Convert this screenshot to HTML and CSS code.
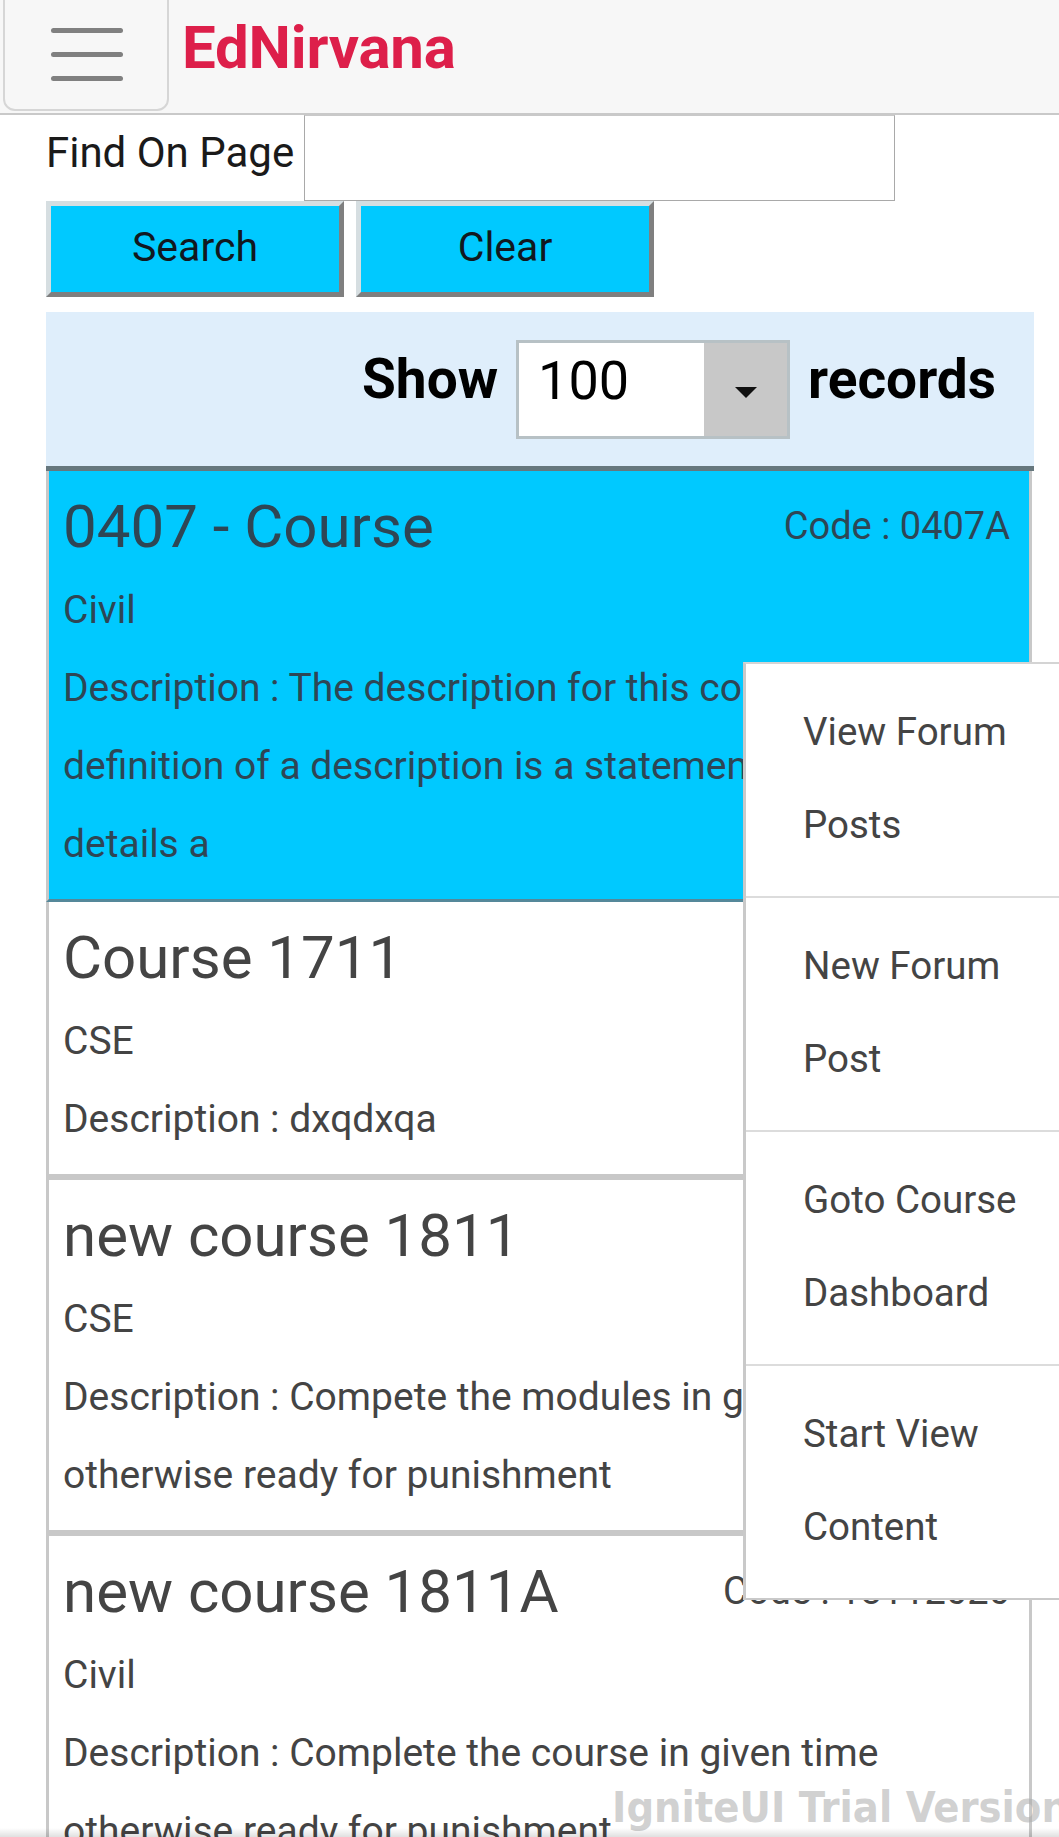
FILE: index.html
```html
<!DOCTYPE html>
<html lang="en">
<head>
<meta charset="utf-8">
<title>EdNirvana</title>
<link rel="stylesheet" href="styles.css">
</head>
<body>
<header class="header">
  <button class="burger" aria-label="Menu">
    <span class="bar"></span><span class="bar"></span><span class="bar"></span>
  </button>
  <div class="brand">EdNirvana</div>
</header>

<main class="main">
  <div class="find-row">
    <label class="find-label">Find On Page</label>
    <input class="find-input" type="text">
  </div>
  <div class="btn-row">
    <button class="btn">Search</button>
    <button class="btn">Clear</button>
  </div>

  <div class="show-bar">
    <span class="show-label">Show</span>
    <div class="select">
      <span class="select-value">100</span>
      <span class="select-arrow"><span class="tri"></span></span>
    </div>
    <span class="show-label">records</span>
  </div>

  <div class="cards">
    <div class="card card-active">
      <div class="card-head">
        <div class="card-title">0407 - Course</div>
        <div class="card-code">Code : 0407A</div>
      </div>
      <p class="card-line">Civil</p>
      <p class="card-line">Description : The description for this course. The definition of a description is a statement that gives details a</p>
    </div>
    <div class="card">
      <div class="card-head">
        <div class="card-title">Course 1711</div>
        <div class="card-code">Code : 1711</div>
      </div>
      <p class="card-line">CSE</p>
      <p class="card-line">Description : dxqdxqa</p>
    </div>
    <div class="card">
      <div class="card-head">
        <div class="card-title">new course 1811</div>
        <div class="card-code">Code : 1811</div>
      </div>
      <p class="card-line">CSE</p>
      <p class="card-line">Description : Compete the modules in given time otherwise ready for punishment</p>
    </div>
    <div class="card">
      <div class="card-head">
        <div class="card-title">new course 1811A</div>
        <div class="card-code">Code : 18112020</div>
      </div>
      <p class="card-line">Civil</p>
      <p class="card-line">Description : Complete the course in given time otherwise ready for punishment</p>
    </div>
  </div>
</main>

<div class="ctx-menu">
  <div class="ctx-item"><span class="ctx-text">View Forum Posts</span></div>
  <div class="ctx-item"><span class="ctx-text">New Forum Post</span></div>
  <div class="ctx-item"><span class="ctx-text">Goto Course Dashboard</span></div>
  <div class="ctx-item"><span class="ctx-text">Start View Content</span></div>
</div>

<div class="watermark">IgniteUI Trial Version</div>
<div class="bottom-shade"></div>
</body>
</html>
```

FILE: styles.css
```css
html, body {
  margin: 0;
  padding: 0;
  overflow: hidden;
}
body {
  position: relative;
  width: 1059px;
  height: 1837px;
  font-family: Roboto, "Liberation Sans", sans-serif;
  background: #ffffff;
  color: #444444;
}

/* Header */
.header {
  display: flex;
  align-items: flex-start;
  height: 113px;
  background: #f7f7f7;
  border-bottom: 2px solid #c9c9c9;
}
.burger {
  box-sizing: border-box;
  width: 166px;
  height: 114px;
  margin: -3px 0 0 3px;
  background: #f7f7f7;
  border: 2px solid #d6d6d6;
  border-radius: 0 0 12px 12px;
  display: flex;
  flex-direction: column;
  align-items: center;
  justify-content: center;
  gap: 19px;
  padding: 0 0 0 2px;
}
.burger .bar {
  display: block;
  width: 72px;
  height: 5px;
  border-radius: 3px;
  background: #808080;
}
.brand {
  margin: 18px 0 0 13px;
  font-size: 60px;
  line-height: 60px;
  font-weight: 700;
  color: #dd1f4a;
  letter-spacing: -0.2px;
}

/* Find row */
.main {
  padding-left: 46px;
}
.find-row {
  display: flex;
  align-items: flex-start;
}
.find-label {
  width: 258px;
  font-size: 42px;
  line-height: 75px;
  color: #1a1a1a;
}
.find-input {
  box-sizing: border-box;
  width: 591px;
  height: 86px;
  margin: 0;
  border: 1px solid #a9a9a9;
  border-top-color: #c9c9c9;
  background: #fff;
}
.btn-row {
  display: flex;
  gap: 12px;
  margin-top: 0;
}
.btn {
  box-sizing: border-box;
  width: 298px;
  height: 96px;
  background: #00c9ff;
  border-style: solid;
  border-width: 5px;
  border-color: #d6dee1 #7f7f7f #7f7f7f #d6dee1;
  font-family: Roboto, "Liberation Sans", sans-serif;
  font-size: 41px;
  color: #111820;
  padding: 0 0 5px 0;
}

/* Show bar */
.show-bar {
  box-sizing: border-box;
  width: 988px;
  height: 159px;
  margin-top: 15px;
  background: #dfeefb;
  border-bottom: 5px solid #66777d;
  display: flex;
  justify-content: flex-end;
  align-items: center;
  gap: 18px;
  padding-right: 38px;
}
.show-label {
  font-size: 55px;
  font-weight: 700;
  color: #000;
  padding-bottom: 20px;
}
.select {
  box-sizing: border-box;
  width: 274px;
  height: 99px;
  border: 3px solid #b7c1c5;
  display: flex;
  background: #fff;
}
.select-value {
  flex: 1;
  padding-left: 19px;
  font-size: 54px;
  line-height: 76px;
  color: #000;
}
.select-arrow {
  width: 83px;
  background: #c8c8c8;
  display: flex;
  align-items: center;
  justify-content: center;
}
.tri {
  width: 0;
  height: 0;
  border-left: 11px solid transparent;
  border-right: 11px solid transparent;
  border-top: 11px solid #111;
  margin-top: 6px;
}

/* Cards */
.cards {
  width: 986px;
}
.card {
  box-sizing: border-box;
  padding: 11px 19px 16px 14px;
  background: #fff;
  border-left: 3px solid #c8c8c8;
  border-right: 3px solid #c8c8c8;
  border-bottom: 6px solid #c8c8c8;
  color: #444;
}
.card-active {
  background: #00c9ff;
  color: #2e4655;
  border-bottom: 3px solid #55889a;
}
.card-head {
  display: flex;
  justify-content: space-between;
  align-items: flex-start;
}
.card-title {
  font-size: 60px;
  line-height: 89px;
  white-space: nowrap;
}
.card-code {
  font-size: 38px;
  line-height: 88px;
  white-space: nowrap;
}
.card-line {
  margin: 0;
  font-size: 39px;
  line-height: 78px;
}

/* Context menu overlay */
.ctx-menu {
  position: absolute;
  left: 743px;
  top: 662px;
  width: 345px;
  background: #fff;
  border-left: 3px solid #c9c9c9;
  border-top: 2px solid #d4d4d4;
  border-bottom: 2px solid #c9c9c9;
}
.ctx-item {
  box-sizing: border-box;
  height: 234px;
  padding: 21px 20px 0 57px;
  border-bottom: 2px solid #dcdcdc;
}
.ctx-item:last-child {
  border-bottom: none;
  height: 232px;
}
.ctx-text {
  display: block;
  width: 240px;
  font-size: 38.5px;
  line-height: 93px;
  color: #444;
}

/* Watermark */
.watermark {
  position: absolute;
  left: 612px;
  top: 1782px;
  font-family: "DejaVu Sans Condensed", "DejaVu Sans", Verdana, sans-serif;
  font-stretch: condensed;
  font-weight: 700;
  font-size: 43px;
  line-height: 50px;
  color: rgba(170, 170, 170, 0.55);
  white-space: nowrap;
}
.bottom-shade {
  position: absolute;
  left: 0;
  right: 0;
  top: 1828px;
  height: 9px;
  background: linear-gradient(rgba(0,0,0,0), rgba(0,0,0,0.12));
}
```
